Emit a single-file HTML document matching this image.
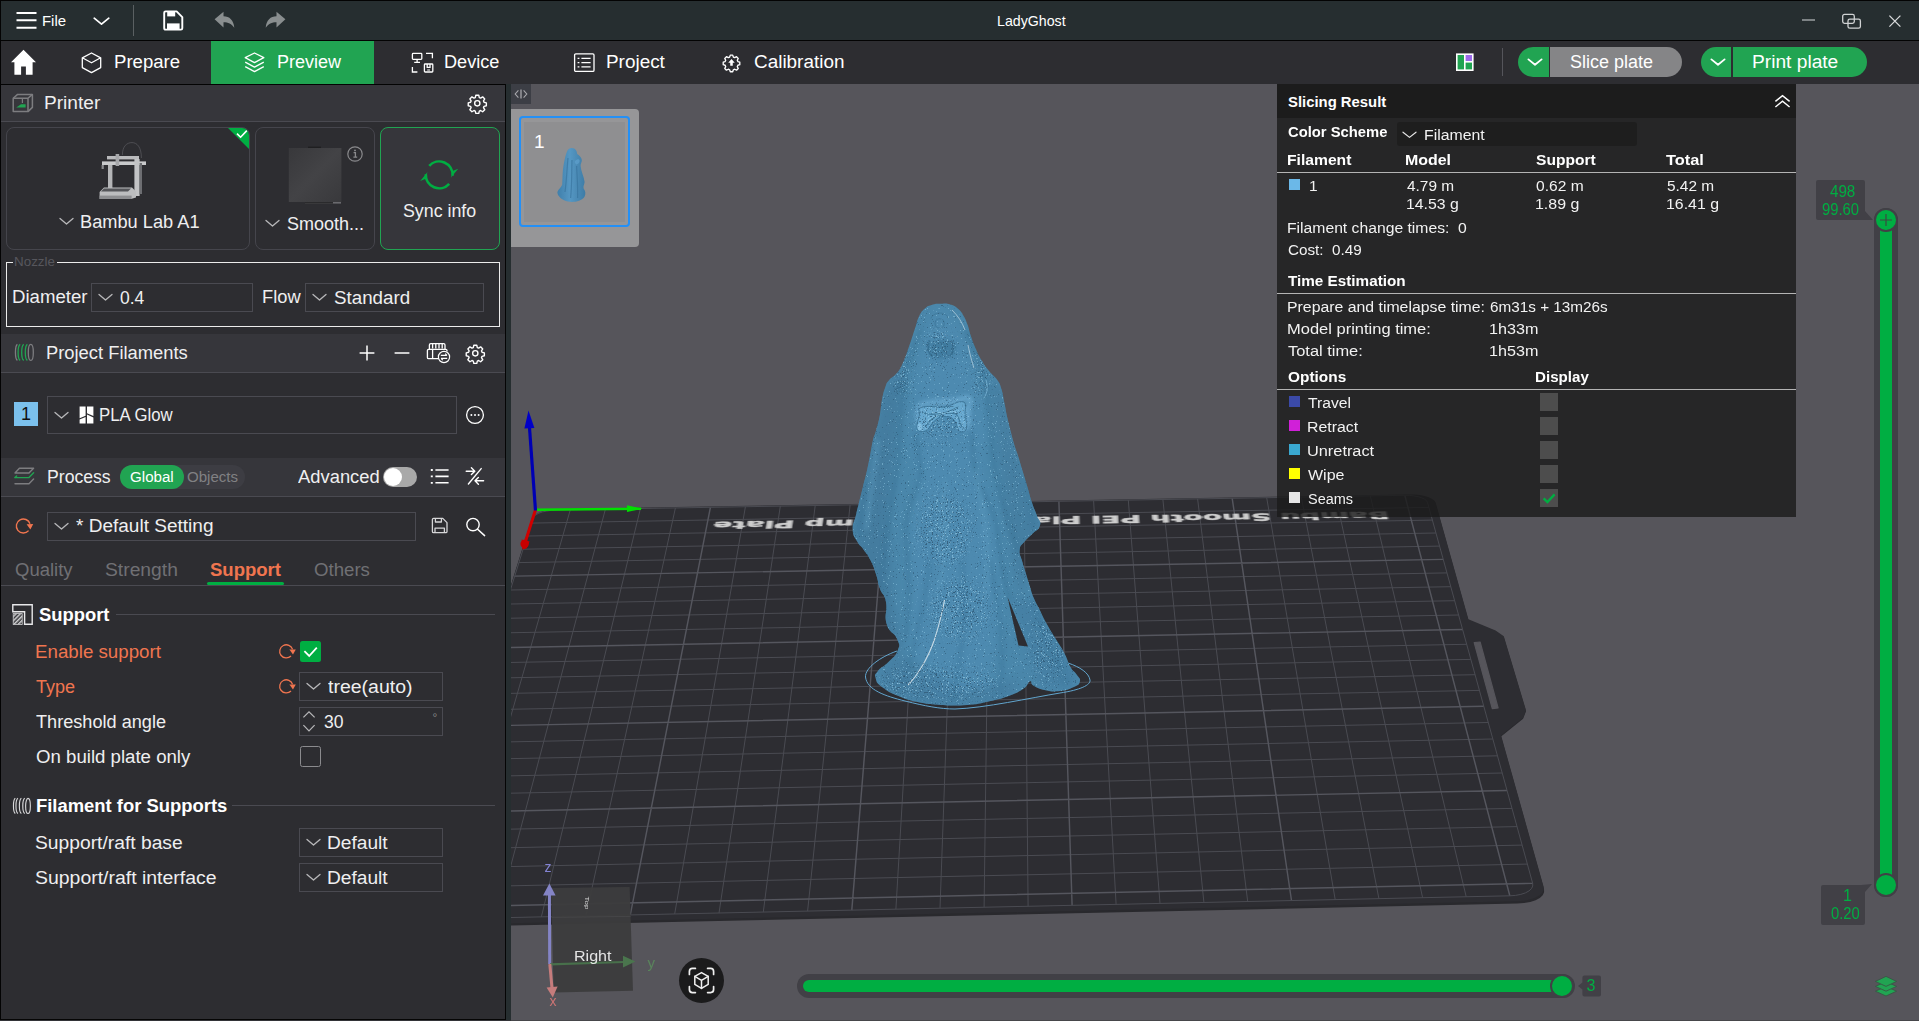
<!DOCTYPE html>
<html lang="en">
<head>
<meta charset="utf-8">
<title>LadyGhost</title>
<style>
*{box-sizing:border-box;margin:0;padding:0}
html,body{width:1919px;height:1021px;overflow:hidden;background:#56555b}
body{font-family:"Liberation Sans",sans-serif;color:#efeff0;font-size:18px;position:relative}
.abs{position:absolute}
.t{position:absolute;white-space:nowrap;line-height:1;transform-origin:0 50%}
svg{position:absolute;overflow:visible}
#titlebar{position:absolute;left:0;top:0;width:1919px;height:41px;background:#262e30;border-top:1px solid #030303;border-left:1px solid #030303;border-bottom:1px solid #030303}
#tabbar{position:absolute;left:0;top:41px;width:1919px;height:43px;background:#2d2d31;border-left:1px solid #030303}
#tabsel{position:absolute;left:211px;top:41px;width:163px;height:43px;background:#21a452}
#sidebar{position:absolute;left:0;top:84px;width:506px;height:937px;background:#2d2d31;border-left:1px solid #030303;border-top:1px solid #030303}
#gap{position:absolute;left:505px;top:84px;width:6px;height:937px;background:#262e30;border-left:1px solid #050505}
.hdr{position:absolute;left:1px;width:504px;background:#36363b}
.hl{position:absolute;left:1px;width:504px;height:1px;background:#4a4a51}
.card{position:absolute;border:1px solid #45454c;border-radius:8px;background:#2d2d31}
.combo{position:absolute;border:1px solid #4a4a51;background:#2d2d31}
.org{color:#f0754f}
.dim{color:#818183}
</style>
<style>
#tFile{left:41.5px!important;transform:scaleX(0.9634)}
#tTitle{left:996.6px!important;transform:scaleX(0.9464)}
#tPrepare{left:113.5px!important;transform:scaleX(1.0313)}
#tPreview{left:276.6px!important;transform:scaleX(1.0012)}
#tDevice{left:444.3px!important;transform:scaleX(1.0072)}
#tProject{left:605.5px!important;transform:scaleX(1.0505)}
#tCalib{left:754.4px!important;transform:scaleX(1.0508)}
#tSlice{left:1569.6px!important;transform:scaleX(0.9983)}
#tPrint{left:1751.6px!important;transform:scaleX(1.0646)}
#tPrinter{left:44.2px!important;transform:scaleX(1.0611)}
#tBambu{left:80.4px!important;transform:scaleX(1.0121)}
#tSmooth{left:287.0px!important;transform:scaleX(0.9995)}
#tSync{left:403.0px!important;transform:scaleX(0.9888)}
#tNozzle{left:13.9px!important;transform:scaleX(1.0736)}
#tDiameter{left:11.5px!important;transform:scaleX(1.0344)}
#tD04{left:120.0px!important;transform:scaleX(0.9715)}
#tFlow{left:262.0px!important;transform:scaleX(1.0157)}
#tStandard{left:334.0px!important;transform:scaleX(1.0410)}
#tProjFil{left:46.3px!important;transform:scaleX(1.0192)}
#tPLA{left:98.6px!important;transform:scaleX(0.9309)}
#tProcess{left:46.5px!important;transform:scaleX(0.9794)}
#tGlobal{left:130.4px!important;transform:scaleX(0.9761)}
#tObjects{left:186.5px!important;transform:scaleX(0.9716)}
#tAdvanced{left:298.4px!important;transform:scaleX(1.0209)}
#tDefSet{left:76.3px!important;transform:scaleX(1.0568)}
#tQuality{left:15.3px!important;transform:scaleX(1.0282)}
#tStrength{left:105.0px!important;transform:scaleX(1.0711)}
#tSupTab{left:210.0px!important;transform:scaleX(1.0291)}
#tOthers{left:314.3px!important;transform:scaleX(1.0348)}
#tSupHead{left:38.8px!important;transform:scaleX(1.0219)}
#tEnable{left:34.7px!important;transform:scaleX(1.0401)}
#tType{left:35.7px!important;transform:scaleX(1.0022)}
#tTree{left:328.2px!important;transform:scaleX(1.0825)}
#tThresh{left:35.7px!important;transform:scaleX(1.0072)}
#t30{left:324.4px!important;transform:scaleX(0.9745)}
#tOnBuild{left:35.7px!important;transform:scaleX(1.0349)}
#tFilSup{left:36.0px!important;transform:scaleX(1.0232)}
#tRaftBase{left:35.1px!important;transform:scaleX(1.0697)}
#tDef1{left:327.1px!important;transform:scaleX(1.0637)}
#tRaftInt{left:35.1px!important;transform:scaleX(1.0798)}
#tDef2{left:327.1px!important;transform:scaleX(1.0637)}
#pSlicing{left:1288.2px!important;transform:scaleX(0.9587)}
#pColorScheme{left:1288.2px!important;transform:scaleX(0.9541)}
#pFilCombo{left:1424.0px!important;transform:scaleX(1.0215)}
#pHFil{left:1287.2px!important;transform:scaleX(1.0100)}
#pHModel{left:1405.3px!important;transform:scaleX(1.0283)}
#pHSupport{left:1536.2px!important;transform:scaleX(1.0060)}
#pHTotal{left:1666.0px!important;transform:scaleX(1.0571)}
#pM1{left:1406.6px!important;transform:scaleX(0.9941)}
#pM2{left:1405.6px!important;transform:scaleX(1.0201)}
#pS1{left:1536.2px!important;transform:scaleX(1.0049)}
#pS2{left:1535.2px!important;transform:scaleX(1.0272)}
#pT1{left:1666.5px!important;transform:scaleX(0.9941)}
#pT2{left:1665.5px!important;transform:scaleX(1.0241)}
#pFCT{left:1287.2px!important;transform:scaleX(1.0133)}
#pCost{left:1288.2px!important;transform:scaleX(0.9834)}
#pTimeEst{left:1288.3px!important;transform:scaleX(0.9851)}
#pPrep{left:1287.3px!important;transform:scaleX(1.0212)}
#pPrepV{left:1489.5px!important;transform:scaleX(0.9868)}
#pMPT{left:1287.2px!important;transform:scaleX(1.0636)}
#pMPTV{left:1488.5px!important;transform:scaleX(1.0422)}
#pTT{left:1288.3px!important;transform:scaleX(1.0587)}
#pTTV{left:1488.5px!important;transform:scaleX(1.0422)}
#pOptions{left:1288.3px!important;transform:scaleX(0.9943)}
#pDisplay{left:1535.4px!important;transform:scaleX(0.9759)}
#pTravel{left:1308.2px!important;transform:scaleX(1.0108)}
#pRetract{left:1307.2px!important;transform:scaleX(1.0231)}
#pUnretract{left:1307.1px!important;transform:scaleX(1.0531)}
#pWipe{left:1308.2px!important;transform:scaleX(1.0319)}
#pSeams{left:1308.2px!important;transform:scaleX(0.9342)}
#tV498{left:1829.6px!important;transform:scaleX(0.9479)}
#tV9960{left:1821.8px!important;transform:scaleX(0.9267)}
#tV020{left:1830.6px!important;transform:scaleX(0.9218)}
</style>
</head>
<body>
<div id="titlebar"></div>
<div id="tabbar"></div>
<div class="abs" style="left:0;top:84px;width:506px;height:1px;background:#030303"></div>
<div id="tabsel"></div>
<!-- title bar content -->
<svg style="left:16px;top:11px" width="22" height="20" viewBox="0 0 22 20"><path d="M0.5 2H20.5M0.5 9.3H20.5M0.5 16.7H20.5" stroke="#fff" stroke-width="2" fill="none"/></svg>
<div class="t" id="tFile" style="left:42px;top:12.5px;font-size:15.5px;color:#fff">File</div>
<svg style="left:93px;top:17px" width="17" height="9" viewBox="0 0 17 9"><path d="M1.2 1.2L8.5 7.2L15.8 1.2" stroke="#fff" stroke-width="1.7" fill="none" stroke-linecap="round" stroke-linejoin="round"/></svg>
<div class="abs" style="left:133px;top:5px;width:1px;height:31px;background:#5a6062"></div>
<svg style="left:163px;top:10px" width="21" height="21" viewBox="0 0 21 21"><path d="M2.6 1.4H13.6L19.3 7.1V18.2Q19.3 19.6 17.9 19.6H2.6Q1.2 19.6 1.2 18.2V2.8Q1.2 1.4 2.6 1.4Z" fill="none" stroke="#fff" stroke-width="1.9" stroke-linejoin="round"/><rect x="4.2" y="2" width="8" height="4.4" fill="#fff"/><rect x="4" y="13.4" width="12.6" height="5.6" fill="#fff"/></svg>
<svg style="left:214px;top:11px" width="22" height="18" viewBox="0 0 22 18"><path d="M0.6 8.2L9.5 0.8V5.2C15.5 5.2 19.6 9 20.3 16.8C17.6 12.6 14.2 11.2 9.5 11.2V16.4Z" fill="#898e8f"/></svg>
<svg style="left:264px;top:11px" width="22" height="18" viewBox="0 0 22 18"><path d="M21.4 8.2L12.5 0.8V5.2C6.5 5.2 2.4 9 1.7 16.8C4.4 12.6 7.8 11.2 12.5 11.2V16.4Z" fill="#898e8f"/></svg>
<div class="t" id="tTitle" style="left:997px;top:13px;font-size:15px;color:#fff">LadyGhost</div>
<!-- window buttons -->
<svg style="left:1800px;top:10px" width="110" height="22" viewBox="0 0 110 22"><path d="M2 10H15" stroke="#aeb2b3" stroke-width="1.3"/><rect x="42.7" y="4.4" width="11.6" height="9" rx="1.8" fill="none" stroke="#d0d2d3" stroke-width="1.3"/><rect x="48" y="9.2" width="12.4" height="9" rx="1.8" fill="none" stroke="#d0d2d3" stroke-width="1.3"/><path d="M89.4 5.6L100.4 16.6M100.4 5.6L89.4 16.6" stroke="#d8dadb" stroke-width="1.3"/></svg>
<!-- tab bar content -->
<svg style="left:10px;top:49px" width="27" height="27" viewBox="0 0 27 27"><path d="M13.5 0.8L26 13.2H22.6V25.8H15.9V17.4H11.1V25.8H4.4V13.2H1Z" fill="#fff"/></svg>
<svg style="left:81px;top:52px" width="22" height="22" viewBox="0 0 22 22"><path d="M10.5 1L19.7 5.8V15.6L10.5 20.6L1.3 15.6V5.8Z M1.3 5.8L10.5 10.8L19.7 5.8" fill="none" stroke="#fff" stroke-width="1.3" stroke-linejoin="round"/></svg>
<div class="t" id="tPrepare" style="left:114px;top:53px;font-size:18px;color:#fff">Prepare</div>
<svg style="left:244px;top:52px" width="22" height="22" viewBox="0 0 22 22"><path d="M10.5 1L19.8 5.7L10.5 10.6L1.2 5.7Z M1.2 10.2L10.5 15.1L19.8 10.2 M1.2 14.7L10.5 19.6L19.8 14.7" fill="none" stroke="#fff" stroke-width="1.3" stroke-linejoin="round"/></svg>
<div class="t" id="tPreview" style="left:277px;top:53px;font-size:18px;color:#fff">Preview</div>
<svg style="left:411px;top:52px" width="24" height="22" viewBox="0 0 24 22"><g fill="none" stroke="#fff" stroke-width="1.3"><rect x="1.4" y="1.4" width="9.4" height="6" rx="0.8"/><path d="M6.1 7.4V10.3M3.2 10.3H9"/><path d="M15 1.4H21.4V6.2"/><path d="M1.4 15V20H6.4"/><rect x="13.4" y="12" width="8.4" height="8" rx="0.8"/><path d="M16.2 12V15.4H19V12"/><path d="M16.2 18H19" stroke-width="1"/></g></svg>
<div class="t" id="tDevice" style="left:445px;top:53px;font-size:18px;color:#fff">Device</div>
<svg style="left:573px;top:52px" width="23" height="21" viewBox="0 0 23 21"><g fill="none" stroke="#fff" stroke-width="1.3"><rect x="1.6" y="1.8" width="19.4" height="17.6" rx="1.2"/><path d="M8.4 6.3H17.6M8.4 10.6H17.6M8.4 14.9H17.6"/><path d="M4.6 6.3H6.4M4.6 10.6H6.4M4.6 14.9H6.4"/></g></svg>
<div class="t" id="tProject" style="left:606px;top:53px;font-size:18px;color:#fff">Project</div>
<svg style="left:723px;top:54px" width="17" height="17" viewBox="0 0 24 24"><path d="M10.3 1.6h3.4l0.9 2.7 1.9 0.8 2.6-1.3 2.4 2.4-1.3 2.6 0.8 1.9 2.7 0.9v3.4l-2.7 0.9-0.8 1.9 1.3 2.6-2.4 2.4-2.6-1.3-1.9 0.8-0.9 2.7h-3.4l-0.9-2.7-1.9-0.8-2.6 1.3-2.4-2.4 1.3-2.6-0.8-1.9-2.7-0.9v-3.4l2.7-0.9 0.8-1.9-1.3-2.6 2.4-2.4 2.6 1.3 1.9-0.8z" fill="none" stroke="#fff" stroke-width="1.9" stroke-linejoin="round"/><path d="M12 7.2L16.6 12.4H13.8V16.6H10.2V12.4H7.4Z" fill="#fff"/></svg>
<div class="t" id="tCalib" style="left:754px;top:53px;font-size:18px;color:#fff">Calibration</div>
<!-- right side of tab bar -->
<svg style="left:1455px;top:52px" width="20" height="20" viewBox="0 0 20 20"><rect x="1" y="1.4" width="17.6" height="17.6" fill="#fff"/><rect x="2.6" y="3" width="6.4" height="14.4" fill="#21a452"/><rect x="10.6" y="10.6" width="6.4" height="6.8" fill="#21a452"/><rect x="10.6" y="3" width="6.4" height="6" fill="#9b6ae8"/></svg>
<div class="abs" style="left:1502px;top:48px;width:1px;height:28px;background:#55555b"></div>
<div class="abs" style="left:1518px;top:47px;width:31px;height:30px;background:#21a452;border-radius:15px 0 0 15px"></div>
<div class="abs" style="left:1550px;top:47px;width:132px;height:30px;background:#858587;border-radius:0 15px 15px 0"></div>
<svg style="left:1527px;top:58px" width="16" height="9" viewBox="0 0 16 9"><path d="M1.4 1.4L8 6.8L14.6 1.4" stroke="#fff" stroke-width="1.8" fill="none" stroke-linecap="round" stroke-linejoin="round"/></svg>
<div class="t" id="tSlice" style="left:1569px;top:53px;font-size:18px;color:#fff">Slice plate</div>
<div class="abs" style="left:1701px;top:47px;width:30px;height:30px;background:#21a452;border-radius:15px 0 0 15px"></div>
<div class="abs" style="left:1733px;top:47px;width:134px;height:30px;background:#21a452;border-radius:0 15px 15px 0"></div>
<svg style="left:1710px;top:58px" width="16" height="9" viewBox="0 0 16 9"><path d="M1.4 1.4L8 6.8L14.6 1.4" stroke="#fff" stroke-width="1.8" fill="none" stroke-linecap="round" stroke-linejoin="round"/></svg>
<div class="t" id="tPrint" style="left:1752px;top:53px;font-size:18px;color:#fff">Print plate</div>
<div id="sidebar"></div>
<div id="gap"></div>
<!-- Printer header -->
<div class="hdr" style="top:85px;height:36px"></div>
<div class="hl" style="top:121px"></div>
<svg style="left:12px;top:93px" width="22" height="20" viewBox="0 0 22 20"><g fill="none" stroke="#7d7d80" stroke-width="1.5" stroke-linejoin="round"><path d="M1.2 5.2L5.6 1.4H20.4V14.4L16 18.6H1.2Z"/><path d="M1.2 5.2H16V18.6M16 5.2L20.4 1.4"/></g><path d="M10.4 5.4V10" stroke="#7d7d80" stroke-width="1.2"/><path d="M4.2 14.6L9 11.2H13.6V14.6Z" fill="#21a452"/></svg>
<div class="t" id="tPrinter" style="left:45px;top:94px;font-size:18px">Printer</div>
<svg style="left:467.6px;top:93.6px" width="18.6" height="18.6" viewBox="0 0 24 24"><path id="gear" d="M10.1 1.6h3.8l0.7 3 1.7 0.7 2.6-1.6 2.7 2.7-1.6 2.6 0.7 1.7 3 0.7v3.8l-3 0.7-0.7 1.7 1.6 2.6-2.7 2.7-2.6-1.6-1.7 0.7-0.7 3h-3.8l-0.7-3-1.7-0.7-2.6 1.6-2.7-2.7 1.6-2.6-0.7-1.7-3-0.7v-3.8l3-0.7 0.7-1.7-1.6-2.6 2.7-2.7 2.6 1.6 1.7-0.7z" fill="none" stroke="#fff" stroke-width="1.8" stroke-linejoin="round"/><circle cx="12" cy="12" r="3.4" fill="none" stroke="#fff" stroke-width="1.8"/></svg>
<!-- printer cards -->
<div class="card" style="left:6px;top:127px;width:244px;height:123px;overflow:hidden"><svg style="right:-1px;top:-1px;left:auto" width="23" height="23" viewBox="0 0 23 23"><path d="M0 0H23V23Z" fill="#00ae42"/><path d="M10 6.6L13.6 10.2L19.8 3.6" stroke="#fff" stroke-width="1.6" fill="none"/></svg></div>
<!-- printer illustration -->
<svg style="left:98px;top:141px" width="52" height="60" viewBox="0 0 52 60"><path d="M24.4 14C24.4 5 29 1.6 34 1.6S43.4 6 43.4 17" fill="none" stroke="#55555a" stroke-width="0.8"/><rect x="9" y="15" width="32" height="3.4" fill="#b9babc"/><rect x="4" y="20.4" width="44" height="3.6" fill="#c8c9cb"/><rect x="10" y="24" width="4.4" height="26" fill="#b4b5b7"/><rect x="36.4" y="18" width="5.2" height="37" fill="#c2c3c5"/><rect x="41.6" y="22" width="2.4" height="31" fill="#6d6e72"/><rect x="17.6" y="13" width="3.6" height="12" fill="#a6a7aa"/><path d="M1.6 51L6 46.4H34L38 50.4V56.4L33 58H1.6Z" fill="#bcbdbf"/><path d="M6 47.4H33L30 50.6H3Z" fill="#55565a"/><rect x="1.6" y="54.6" width="32" height="3.4" fill="#8d8e91"/><rect x="3.6" y="24" width="2.2" height="4" fill="#8a8b8e"/></svg>
<svg style="left:59px;top:217px" width="15" height="9" viewBox="0 0 15 9"><path d="M1 1.4L7.5 7L14 1.4" stroke="#b8b8ba" stroke-width="1.3" fill="none" stroke-linecap="round" stroke-linejoin="round"/></svg>
<div class="t" id="tBambu" style="left:81px;top:213px;font-size:18px">Bambu Lab A1</div>
<div class="card" style="left:255px;top:127px;width:120px;height:123px"></div>
<svg style="left:288px;top:146px" width="54" height="58" viewBox="0 0 54 58"><defs><linearGradient id="bedg" x1="0" y1="0" x2="1" y2="1"><stop offset="0" stop-color="#38383b"/><stop offset="0.5" stop-color="#434346"/><stop offset="1" stop-color="#39393c"/></linearGradient></defs><rect x="20" y="0.6" width="13" height="2" fill="#1f1f21"/><rect x="0.8" y="2" width="52.6" height="54" fill="url(#bedg)"/><rect x="17" y="56" width="36" height="1.6" fill="#6a6a6e"/><rect x="17" y="56" width="28" height="1.6" fill="#2a2a2c"/></svg>
<svg style="left:346px;top:145px" width="18" height="18" viewBox="0 0 18 18"><circle cx="9" cy="9" r="7.2" fill="none" stroke="#8a8a8d" stroke-width="1.2"/><path d="M7.6 7.6H9.4V12M7.4 12.2H11.2" stroke="#8a8a8d" stroke-width="1.3" fill="none"/><circle cx="9" cy="5.4" r="0.95" fill="#8a8a8d"/></svg>
<svg style="left:265px;top:219px" width="15" height="9" viewBox="0 0 15 9"><path d="M1 1.4L7.5 7L14 1.4" stroke="#b8b8ba" stroke-width="1.3" fill="none" stroke-linecap="round" stroke-linejoin="round"/></svg>
<div class="t" id="tSmooth" style="left:287px;top:215px;font-size:18px">Smooth...</div>
<div class="card" style="left:380px;top:127px;width:120px;height:123px;border-color:#21a452;background:#36363b"></div>
<svg style="left:420px;top:159px" width="39" height="32" viewBox="0 0 39 32"><g fill="none" stroke="#00ae42" stroke-width="2.6"><path d="M9.24 6.93A13.4 13.4 0 0 1 32.58 16.6"/><path d="M29.16 24.87A13.4 13.4 0 0 1 5.82 15.2"/></g><path d="M33.2 11.8L38.2 9.8L30.8 18.8Z" fill="#00ae42"/><path d="M5.2 20L0.2 22L7.6 13Z" fill="#00ae42"/></svg>
<div class="t" id="tSync" style="left:403px;top:202px;font-size:18px">Sync info</div>
<!-- Nozzle -->
<div class="abs" style="left:6px;top:262px;width:494px;height:65px;border:1px solid #ececec"></div>
<div class="abs" style="left:13px;top:258px;width:44px;height:10px;background:#2d2d31"></div>
<div class="t" id="tNozzle" style="left:15px;top:256px;font-size:12.5px;color:#57575d">Nozzle</div>
<div class="t" id="tDiameter" style="left:12px;top:288px;font-size:18px">Diameter</div>
<div class="combo" style="left:91px;top:283px;width:162px;height:29px"></div>
<svg style="left:98px;top:293px" width="15" height="9" viewBox="0 0 15 9"><path d="M1 1.4L7.5 7L14 1.4" stroke="#b8b8ba" stroke-width="1.3" fill="none" stroke-linecap="round" stroke-linejoin="round"/></svg>
<div class="t" id="tD04" style="left:120px;top:289px;font-size:18px">0.4</div>
<div class="t" id="tFlow" style="left:263px;top:288px;font-size:18px">Flow</div>
<div class="combo" style="left:305px;top:283px;width:179px;height:29px"></div>
<svg style="left:312px;top:293px" width="15" height="9" viewBox="0 0 15 9"><path d="M1 1.4L7.5 7L14 1.4" stroke="#b8b8ba" stroke-width="1.3" fill="none" stroke-linecap="round" stroke-linejoin="round"/></svg>
<div class="t" id="tStandard" style="left:334px;top:289px;font-size:18px">Standard</div>
<!-- Project Filaments -->
<div class="hdr" style="top:334px;height:38px"></div>
<div class="hl" style="top:372px"></div>
<svg style="left:15px;top:343px" width="20" height="19" viewBox="0 0 20 19"><g fill="none" stroke-width="1.3"><ellipse cx="15.8" cy="9.4" rx="2.5" ry="8" stroke="#7d7d80"/><path d="M12.4 1.4C9.6 3 9.6 15.8 12.4 17.4" stroke="#21a452"/><path d="M8.8 1.4C6 3 6 15.8 8.8 17.4" stroke="#21a452"/><path d="M5.2 1.4C2.4 3 2.4 15.8 5.2 17.4" stroke="#21a452"/><path d="M2.4 1.4C-0.2 3 -0.2 15.8 2.4 17.4" stroke="#7d7d80"/></g></svg>
<div class="t" id="tProjFil" style="left:47px;top:344px;font-size:18px">Project Filaments</div>
<svg style="left:359px;top:345px" width="16" height="16" viewBox="0 0 16 16"><path d="M8 0.6V15.4M0.6 8H15.4" stroke="#fff" stroke-width="1.5"/></svg>
<svg style="left:394px;top:345px" width="16" height="16" viewBox="0 0 16 16"><path d="M0.6 8H15.4" stroke="#fff" stroke-width="1.5"/></svg>
<svg style="left:426px;top:342px" width="25" height="22" viewBox="0 0 25 22"><g fill="none" stroke="#fff" stroke-width="1.3"><path d="M3.4 7.4V3Q3.4 1.6 4.8 1.6H17.6Q19 1.6 19 3V7.4"/><path d="M6.6 1.8V6.6M9.8 1.8V6.6M13 1.8V6.6M16.2 1.8V6.6"/><path d="M14 16.6H2.6Q1.4 16.6 1.4 15.4V8.6Q1.4 7.4 2.6 7.4H19.8Q21 7.4 21 8.6V9.4"/><path d="M6.6 7.6V16.4"/></g><circle cx="18" cy="15" r="5.6" fill="#36363b" stroke="#fff" stroke-width="1.2"/><path d="M14.8 13.4H21M19.2 11.6L21 13.4M21.2 16.4H15M16.8 18.2L15 16.4" stroke="#fff" stroke-width="1.1" fill="none"/></svg>
<svg style="left:465.8px;top:343.8px" width="18.6" height="18.6" viewBox="0 0 24 24"><path d="M10.1 1.6h3.8l0.7 3 1.7 0.7 2.6-1.6 2.7 2.7-1.6 2.6 0.7 1.7 3 0.7v3.8l-3 0.7-0.7 1.7 1.6 2.6-2.7 2.7-2.6-1.6-1.7 0.7-0.7 3h-3.8l-0.7-3-1.7-0.7-2.6 1.6-2.7-2.7 1.6-2.6-0.7-1.7-3-0.7v-3.8l3-0.7 0.7-1.7-1.6-2.6 2.7-2.7 2.6 1.6 1.7-0.7z" fill="none" stroke="#fff" stroke-width="1.8" stroke-linejoin="round"/><circle cx="12" cy="12" r="3.4" fill="none" stroke="#fff" stroke-width="1.8"/></svg>
<!-- filament row -->
<div class="abs" style="left:14px;top:402px;width:24px;height:24px;background:#7bc0ec"></div>
<div class="t" id="tNum1" style="left:21px;top:405px;font-size:18px;color:#111">1</div>
<div class="combo" style="left:47px;top:396px;width:410px;height:38px"></div>
<svg style="left:54px;top:411px" width="15" height="9" viewBox="0 0 15 9"><path d="M1 1.4L7.5 7L14 1.4" stroke="#b8b8ba" stroke-width="1.3" fill="none" stroke-linecap="round" stroke-linejoin="round"/></svg>
<svg style="left:79px;top:406px" width="15" height="18" viewBox="0 0 15 18"><path d="M0.6 0.4H6.6V9.8L0.6 12.2Z M0.6 13.4L6.6 11V17.6H0.6Z M8 0.4H14.4V10L8 7.2Z M8 8.6L14.4 11.4V17.6H8Z" fill="#fff"/></svg>
<div class="t" id="tPLA" style="left:99px;top:406px;font-size:18px">PLA Glow</div>
<svg style="left:465px;top:405px" width="20" height="20" viewBox="0 0 20 20"><circle cx="10" cy="10" r="8.4" fill="none" stroke="#fff" stroke-width="1.3"/><circle cx="6.4" cy="10" r="1" fill="#fff"/><circle cx="10" cy="10" r="1" fill="#fff"/><circle cx="13.6" cy="10" r="1" fill="#fff"/></svg>
<!-- Process header -->
<div class="hdr" style="top:458px;height:38px"></div>
<div class="hl" style="top:496px"></div>
<svg style="left:14px;top:467px" width="21" height="19" viewBox="0 0 21 19"><g fill="none" stroke-width="1.4" stroke-linejoin="round" stroke-linecap="round"><path d="M5.4 1.2H19.6L15 6H1Z" stroke="#7d7d80"/><path d="M1 10.6H15L19.6 5.8" stroke="#21a452"/><path d="M1 10.6L2.6 9" stroke="#21a452"/><path d="M1 16.8H15L19.6 12" stroke="#7d7d80"/></g></svg>
<div class="t" id="tProcess" style="left:47px;top:468px;font-size:18px">Process</div>
<div class="abs" style="left:120px;top:465px;width:125px;height:24px;border-radius:12px;background:#3d3d43"></div>
<div class="abs" style="left:120px;top:465px;width:64px;height:24px;border-radius:12px;background:#21a452"></div>
<div class="t" id="tGlobal" style="left:130px;top:469px;font-size:15.5px;color:#fff">Global</div>
<div class="t" id="tObjects" style="left:186px;top:469px;font-size:15.5px;color:#818183">Objects</div>
<div class="t" id="tAdvanced" style="left:298px;top:468px;font-size:18px">Advanced</div>
<div class="abs" style="left:383px;top:467px;width:34px;height:20px;border-radius:10px;background:#a9a9a9"></div>
<div class="abs" style="left:384px;top:468px;width:18px;height:18px;border-radius:9px;background:#fff"></div>
<svg style="left:430px;top:468px" width="20" height="17" viewBox="0 0 20 17"><path d="M5.4 2H18.6M5.4 8.4H18.6M5.4 14.8H18.6" stroke="#fff" stroke-width="1.6"/><path d="M0.8 2H2.8M0.8 8.4H2.8M0.8 14.8H2.8" stroke="#fff" stroke-width="1.8"/></svg>
<svg style="left:465px;top:466px" width="20" height="20" viewBox="0 0 20 20"><g fill="none" stroke="#fff" stroke-width="1.4" stroke-linecap="round" stroke-linejoin="round"><path d="M3.4 18L16.2 2.6"/><path d="M1.2 5.2H9.6M6.4 1.8L9.8 5.2L6.4 8.6"/><path d="M18.6 14.8H10.2M13.4 11.4L10 14.8L13.4 18.2"/></g></svg>
<!-- preset row -->
<svg style="left:15px;top:517px" width="19" height="18" viewBox="0 0 19 18"><path d="M13.6 13.6A7 7 0 1 1 15 6.8" fill="none" stroke="#f0754f" stroke-width="1.4"/><path d="M11.6 7.2L18.2 7L15.4 12.4Z" fill="#f0754f"/></svg>
<div class="combo" style="left:47px;top:512px;width:369px;height:29px"></div>
<svg style="left:54px;top:522px" width="15" height="9" viewBox="0 0 15 9"><path d="M1 1.4L7.5 7L14 1.4" stroke="#b8b8ba" stroke-width="1.3" fill="none" stroke-linecap="round" stroke-linejoin="round"/></svg>
<div class="t" id="tDefSet" style="left:76px;top:517px;font-size:18px">* Default Setting</div>
<svg style="left:431px;top:517px" width="18" height="17" viewBox="0 0 18 17"><path d="M2.6 1.4H11.8L16 5.6V14.4Q16 15.6 14.8 15.6H2.6Q1.4 15.6 1.4 14.4V2.6Q1.4 1.4 2.6 1.4Z M4.4 1.6V5H10.4V1.6 M4 15.4V11.2H13.4V15.4" fill="none" stroke="#d6d6d8" stroke-width="1.3" stroke-linejoin="round"/></svg>
<svg style="left:465px;top:517px" width="21" height="20" viewBox="0 0 21 20"><circle cx="8" cy="7.6" r="6.2" fill="none" stroke="#fff" stroke-width="1.4"/><path d="M12.6 12.2L19.6 18.6" stroke="#fff" stroke-width="1.5" stroke-linecap="round"/></svg>
<!-- tabs -->
<div class="t" id="tQuality" style="left:15px;top:561px;font-size:18px;color:#707074">Quality</div>
<div class="t" id="tStrength" style="left:105px;top:561px;font-size:18px;color:#707074">Strength</div>
<div class="t" id="tSupTab" style="left:210px;top:561px;font-size:18px;color:#f0754f;font-weight:bold">Support</div>
<div class="t" id="tOthers" style="left:314px;top:561px;font-size:18px;color:#707074">Others</div>
<div class="abs" style="left:207px;top:582px;width:77px;height:3px;border-radius:1.5px;background:#00ae42"></div>
<div class="hl" style="top:585px;background:#4a4a51"></div>
<!-- Support group -->
<svg style="left:12px;top:604px" width="22" height="22" viewBox="0 0 22 22"><defs><pattern id="hat" width="3" height="3" patternUnits="userSpaceOnUse" patternTransform="rotate(-45)"><rect width="3" height="1.6" fill="#cfcfd1"/></pattern></defs><path d="M0.8 0.8H20.2V20.2H12.6V7.8H0.8Z" fill="none" stroke="#e8e8ea" stroke-width="1.4"/><rect x="1.2" y="9.6" width="9" height="10.8" fill="url(#hat)" stroke="#cfcfd1" stroke-width="0.8"/></svg>
<div class="t" id="tSupHead" style="left:38px;top:606px;font-size:18px;font-weight:bold;color:#fff">Support</div>
<div class="abs" style="left:116px;top:614px;width:379px;height:1px;background:#4a4a51"></div>
<div class="t org" id="tEnable" style="left:35px;top:643px;font-size:18px">Enable support</div>
<svg style="left:278px;top:643px" width="19" height="17" viewBox="0 0 19 17"><path d="M13 13A6.6 6.6 0 1 1 14.6 6.4" fill="none" stroke="#f0754f" stroke-width="1.3"/><path d="M11.4 6.6L17.8 6.4L15 11.6Z" fill="#f0754f"/></svg>
<div class="abs" style="left:300px;top:641px;width:21px;height:21px;border-radius:2.5px;background:#00ae42"></div>
<svg style="left:300px;top:641px" width="21" height="21" viewBox="0 0 21 21"><path d="M4.4 10.2L9.2 15L16.8 6.6" fill="none" stroke="#fff" stroke-width="1.8"/></svg>
<div class="t org" id="tType" style="left:35px;top:678px;font-size:18px">Type</div>
<svg style="left:278px;top:678px" width="19" height="17" viewBox="0 0 19 17"><path d="M13 13A6.6 6.6 0 1 1 14.6 6.4" fill="none" stroke="#f0754f" stroke-width="1.3"/><path d="M11.4 6.6L17.8 6.4L15 11.6Z" fill="#f0754f"/></svg>
<div class="combo" style="left:299px;top:672px;width:144px;height:29px"></div>
<svg style="left:306px;top:682px" width="15" height="9" viewBox="0 0 15 9"><path d="M1 1.4L7.5 7L14 1.4" stroke="#b8b8ba" stroke-width="1.3" fill="none" stroke-linecap="round" stroke-linejoin="round"/></svg>
<div class="t" id="tTree" style="left:328px;top:678px;font-size:18px">tree(auto)</div>
<div class="t" id="tThresh" style="left:35px;top:713px;font-size:18px">Threshold angle</div>
<div class="combo" style="left:299px;top:707px;width:144px;height:29px"></div>
<svg style="left:302px;top:710px" width="14" height="23" viewBox="0 0 14 23"><path d="M1.4 7.4L7 1.8L12.6 7.4M1.4 15.2L7 20.8L12.6 15.2" stroke="#b8b8ba" stroke-width="1.2" fill="none"/></svg>
<div class="t" id="t30" style="left:324px;top:713px;font-size:18px">30</div>
<div class="t" id="tDeg" style="left:432.5px;top:711.5px;font-size:12px;color:#818183">°</div>
<div class="t" id="tOnBuild" style="left:35px;top:748px;font-size:18px">On build plate only</div>
<div class="abs" style="left:300px;top:746px;width:21px;height:21px;border-radius:2.5px;border:1.3px solid #8b8b8e"></div>
<!-- Filament for supports -->
<svg style="left:13px;top:797px" width="19" height="18" viewBox="0 0 20 19"><g fill="none" stroke-width="1.2" stroke="#d8d8da"><ellipse cx="15.8" cy="9.4" rx="2.5" ry="8"/><path d="M12.4 1.4C9.6 3 9.6 15.8 12.4 17.4"/><path d="M8.8 1.4C6 3 6 15.8 8.8 17.4"/><path d="M5.2 1.4C2.4 3 2.4 15.8 5.2 17.4"/><path d="M2.4 1.4C-0.2 3 -0.2 15.8 2.4 17.4"/></g></svg>
<div class="t" id="tFilSup" style="left:37px;top:797px;font-size:18px;font-weight:bold;color:#fff">Filament for Supports</div>
<div class="abs" style="left:232px;top:805px;width:263px;height:1px;background:#4a4a51"></div>
<div class="t" id="tRaftBase" style="left:35px;top:834px;font-size:18px">Support/raft base</div>
<div class="combo" style="left:299px;top:828px;width:144px;height:29px"></div>
<svg style="left:306px;top:838px" width="15" height="9" viewBox="0 0 15 9"><path d="M1 1.4L7.5 7L14 1.4" stroke="#b8b8ba" stroke-width="1.3" fill="none" stroke-linecap="round" stroke-linejoin="round"/></svg>
<div class="t" id="tDef1" style="left:328px;top:834px;font-size:18px">Default</div>
<div class="t" id="tRaftInt" style="left:35px;top:869px;font-size:18px">Support/raft interface</div>
<div class="combo" style="left:299px;top:863px;width:144px;height:29px"></div>
<svg style="left:306px;top:873px" width="15" height="9" viewBox="0 0 15 9"><path d="M1 1.4L7.5 7L14 1.4" stroke="#b8b8ba" stroke-width="1.3" fill="none" stroke-linecap="round" stroke-linejoin="round"/></svg>
<div class="t" id="tDef2" style="left:328px;top:869px;font-size:18px">Default</div>
<!-- 3D scene -->
<svg id="scene" style="left:511px;top:84px" width="1408" height="937" viewBox="511 84 1408 937">
<defs><clipPath id="vp"><rect x="511" y="84" width="1408" height="937"/></clipPath><filter id="b2" color-interpolation-filters="sRGB" x="-20%" y="-20%" width="140%" height="140%"><feGaussianBlur stdDeviation="2.2"/></filter><filter id="b4" color-interpolation-filters="sRGB" x="-30%" y="-30%" width="160%" height="160%"><feGaussianBlur stdDeviation="4"/></filter><filter id="spk" color-interpolation-filters="sRGB" x="0" y="0" width="100%" height="100%"><feTurbulence type="fractalNoise" baseFrequency="0.9" numOctaves="2" seed="7" result="n"/><feColorMatrix in="n" type="matrix" values="0 0 0 0 0.17  0 0 0 0 0.32  0 0 0 0 0.43  18 0 0 0 -12.4"/></filter><filter id="spk2" color-interpolation-filters="sRGB" x="0" y="0" width="100%" height="100%"><feTurbulence type="fractalNoise" baseFrequency="0.85" numOctaves="2" seed="23" result="n"/><feColorMatrix in="n" type="matrix" values="0 0 0 0 0.62  0 0 0 0 0.83  0 0 0 0 0.93  0 18 0 0 -12.7"/></filter><filter id="spk3" color-interpolation-filters="sRGB" x="0" y="0" width="100%" height="100%"><feTurbulence type="fractalNoise" baseFrequency="0.8" numOctaves="2" seed="41" result="n"/><feColorMatrix in="n" type="matrix" values="0 0 0 0 0.17  0 0 0 0 0.32  0 0 0 0 0.43  18 0 0 0 -11.5"/></filter><filter id="spk4" color-interpolation-filters="sRGB" x="0" y="0" width="100%" height="100%"><feTurbulence type="fractalNoise" baseFrequency="0.8" numOctaves="2" seed="57" result="n"/><feColorMatrix in="n" type="matrix" values="0 0 0 0 0.62  0 0 0 0 0.83  0 0 0 0 0.93  0 18 0 0 -11.7"/></filter><mask id="spm" maskUnits="userSpaceOnUse" x="840" y="290" width="260" height="430"><g filter="url(#b4)" fill="#fff"><ellipse cx="942" cy="420" rx="26" ry="18"/><ellipse cx="944" cy="530" rx="26" ry="36"/><ellipse cx="940" cy="682" rx="58" ry="16"/><ellipse cx="903" cy="372" rx="7" ry="24"/><ellipse cx="982" cy="372" rx="7" ry="24"/><ellipse cx="1048" cy="650" rx="16" ry="32"/><ellipse cx="940" cy="345" rx="14" ry="14"/><ellipse cx="960" cy="610" rx="30" ry="30"/></g></mask></defs>
<g clip-path="url(#vp)">
<path d="M531.7 519.4 L532.9 517.4 L535.3 515.5 L538.8 513.8 L543.1 512.3 L548.1 511.2 L553.4 510.4 L559.0 510.1 L1409.0 495.4 L1414.4 495.5 L1419.7 496.0 L1424.6 497.0 L1428.8 498.3 L1432.1 499.9 L1434.4 501.7 L1435.6 503.6 L1468.4 620.2 L1495.6 631.4 L1503.8 637.2 L1526.0 711.3 L1523.1 718.7 L1501.1 736.5 L1544.0 889.1 L1544.1 892.2 L1542.7 895.2 L1539.8 897.9 L1535.6 900.2 L1530.2 902.0 L1524.0 903.1 L1517.3 903.6 L435.6 927.2 L428.7 927.0 L422.4 926.1 L417.0 924.5 L412.8 922.4 L409.9 919.8 L408.5 916.8 L408.7 913.7Z" fill="#29292d"/>
<path d="M531.7 518.4 L532.9 516.4 L535.3 514.5 L538.8 512.8 L543.1 511.3 L548.1 510.2 L553.4 509.4 L559.0 509.1 L1409.0 494.4 L1414.4 494.5 L1419.7 495.0 L1424.6 496.0 L1428.8 497.3 L1432.1 498.9 L1434.4 500.7 L1435.6 502.6 L1468.4 619.2 L1495.6 630.4 L1503.8 636.2 L1526.0 710.3 L1523.1 717.7 L1501.1 735.5 L1543.6 886.7 L1543.7 889.8 L1542.3 892.8 L1539.4 895.5 L1535.2 897.8 L1529.8 899.6 L1523.7 900.7 L1516.9 901.2 L436.0 924.8 L429.2 924.6 L422.9 923.7 L417.5 922.1 L413.2 919.9 L410.3 917.3 L408.9 914.4 L409.1 911.3Z" fill="#2d2d32"/>
<path d="M1474.2 642.7 L1480.1 642.0 L1498.1 707.9 L1492.3 708.7Z" fill="#56555b" stroke="#56555b" stroke-width="1.2" stroke-linejoin="round"/>
<path d="M570.3 509.8 L452.4 918.8 M531.2 523.1 L1428.9 507.4 M605.4 509.2 L497.0 917.8 M527.2 536.0 L1432.4 520.1 M640.4 508.6 L541.4 916.8 M523.1 549.2 L1435.9 533.0 M675.4 508.0 L585.9 915.9 M519.0 562.6 L1439.5 546.1 M745.4 506.8 L674.7 913.9 M510.4 590.0 L1447.0 572.9 M780.3 506.2 L719.0 913.0 M506.1 604.1 L1450.8 586.7 M815.2 505.6 L763.3 912.0 M501.6 618.4 L1454.6 600.7 M850.1 504.9 L807.6 911.1 M497.1 633.0 L1458.6 615.0 M919.8 503.7 L895.9 909.1 M487.7 662.9 L1466.7 644.3 M954.6 503.1 L940.0 908.2 M482.9 678.3 L1470.8 659.4 M989.4 502.5 L984.1 907.2 M478.1 694.0 L1475.1 674.7 M1024.2 501.9 L1028.1 906.3 M473.1 710.0 L1479.4 690.4 M1093.6 500.7 L1116.1 904.4 M462.9 742.8 L1488.2 722.5 M1128.3 500.1 L1160.0 903.4 M457.6 759.7 L1492.8 739.0 M1162.9 499.5 L1203.9 902.4 M452.3 777.0 L1497.5 755.8 M1197.6 498.9 L1247.7 901.5 M446.8 794.5 L1502.2 773.0 M1266.7 497.7 L1335.2 899.6 M435.5 830.7 L1512.0 808.4 M1301.3 497.1 L1378.9 898.6 M429.7 849.4 L1517.0 826.6 M1335.8 496.5 L1422.6 897.7 M423.8 868.4 L1522.1 845.1 M1370.3 495.9 L1466.2 896.7 M417.8 887.8 L1527.3 864.1" stroke="#4a4b52" stroke-width="1" fill="none"/>
<path d="M710.4 507.4 L630.3 914.9 M514.7 576.1 L1443.2 559.4 M885.0 504.3 L851.8 910.1 M492.4 647.8 L1462.6 629.5 M1058.9 501.3 L1072.1 905.3 M468.0 726.2 L1483.8 706.3 M1232.2 498.3 L1291.5 900.5 M441.2 812.4 L1507.0 790.5 M1404.8 495.3 L1509.8 895.8 M411.6 907.6 L1532.7 883.4" stroke="#55565e" stroke-width="1.45" fill="none"/>
<path d="M532.8 518.0 L533.9 516.3 L536.0 514.7 L538.9 513.2 L542.6 511.9 L546.9 511.0 L551.5 510.3 L556.3 510.0 L1404.8 495.3 L1409.4 495.4 L1413.9 495.9 L1418.1 496.7 L1421.7 497.8 L1424.6 499.2 L1426.5 500.7 L1427.5 502.4 L1532.7 883.4 L1532.7 886.1 L1531.5 888.6 L1529.0 890.9 L1525.4 892.9 L1520.8 894.4 L1515.5 895.4 L1509.8 895.8 L434.6 919.2 L428.7 919.0 L423.3 918.2 L418.7 916.9 L415.1 915.0 L412.6 912.8 L411.4 910.3 L411.6 907.6Z" stroke="#4a4b52" stroke-width="1" fill="none"/>
</g></svg>
<div class="abs" style="left:511px;top:84px;width:1408px;height:937px;overflow:hidden;pointer-events:none">
<div class="abs" style="left:-511px;top:-84px;width:256px;height:256px;transform-origin:0 0;transform:matrix3d(3.5310585,-0.041814572,0,3.7552452e-05,-0.83493848,0.83799194,0,-0.00082731447,0,0,1,0,535.19608,510.41561,0,1)">
<svg style="left:0;top:0" width="256" height="256" viewBox="0 0 256 256"><text x="147.9" y="18.0" text-anchor="middle" font-family="DejaVu Sans,Liberation Sans,sans-serif" font-weight="bold" font-size="8.3" fill="#cdcdcd" textLength="192.2" stroke="#cdcdcd" stroke-width="0.25" lengthAdjust="spacingAndGlyphs" transform="rotate(180.36 147.9 15)">Bambu Smooth PEI Plate / High Temp Plate</text></svg>
</div></div>
<svg style="left:511px;top:84px" width="1408" height="937" viewBox="511 84 1408 937">
<g clip-path="url(#vp)">
<path d="M897 651C880 657 865 668 865.5 677C867 690 885 696 905 701C925 706 940 709 955 709C985 708 1030 698 1060 693C1080 690 1091 685 1090 680C1089 673 1080 667 1068 663" fill="none" stroke="#62a6cf" stroke-width="1"/>
<path d="M1017 647.4L1030 648" fill="none" stroke="#62a6cf" stroke-width="1"/>
<defs><clipPath id="stc"><path d="M940.9 303.8 C945.9 303.7 945.7 303.1 950.3 304.4 C954.9 305.7 954.5 305.7 958.0 308.8 C961.5 311.9 961.1 311.7 963.6 315.9 C966.1 320.1 965.6 319.3 967.5 324.5 C969.4 329.7 968.6 329.2 970.7 335.5 C972.8 341.8 972.5 341.3 975.4 348.0 C978.3 354.7 977.9 354.2 981.7 360.5 C985.5 366.8 985.3 366.3 989.5 371.5 C993.7 376.7 994.2 375.4 997.3 380.0 C1000.4 384.6 999.4 382.6 1001.3 388.7 C1003.2 394.8 1002.7 395.0 1004.4 402.9 C1006.1 410.8 1005.6 410.2 1007.5 418.5 C1009.4 426.8 1009.3 426.3 1011.4 434.2 C1013.5 442.1 1013.6 442.6 1015.4 448.3 C1017.2 454.0 1016.1 449.6 1018.0 455.7 C1019.9 461.8 1020.2 463.0 1022.7 471.3 C1025.2 479.6 1024.9 478.6 1027.4 487.0 C1029.9 495.4 1029.5 495.2 1032.0 502.7 C1034.5 510.2 1034.7 509.1 1036.8 515.2 C1038.9 521.3 1041.3 520.4 1040.0 525.4 C1038.7 530.4 1036.2 529.6 1032.0 534.0 C1027.8 538.4 1027.6 537.6 1024.3 541.8 C1021.0 546.0 1020.2 544.7 1019.6 549.7 C1019.0 554.7 1020.2 554.3 1021.9 560.6 C1023.6 566.9 1023.7 566.5 1025.8 573.2 C1027.9 579.9 1027.6 579.2 1029.7 585.7 C1031.8 592.2 1031.0 591.3 1033.6 597.6 C1036.2 603.9 1036.0 602.4 1039.5 609.4 C1043.0 616.4 1042.5 616.2 1046.8 624.0 C1051.1 631.8 1050.9 631.0 1055.6 638.8 C1060.3 646.6 1060.6 646.0 1064.5 653.4 C1068.4 660.8 1067.2 661.2 1070.3 666.7 C1073.4 672.2 1073.6 670.1 1076.2 674.0 C1078.8 677.9 1080.7 677.9 1079.9 681.4 C1079.1 684.9 1078.6 684.7 1073.3 687.2 C1068.0 689.7 1067.4 690.1 1060.0 690.9 C1052.6 691.7 1052.4 691.6 1045.4 690.2 C1038.4 688.8 1037.7 688.1 1033.6 685.8 C1029.5 683.5 1032.7 680.6 1030.0 681.4 C1027.3 682.2 1029.0 684.8 1023.3 688.7 C1017.6 692.6 1017.6 692.7 1008.6 696.0 C999.6 699.3 1000.5 698.8 989.5 701.2 C978.5 703.6 980.4 703.9 967.5 704.9 C954.6 705.9 954.3 705.7 941.0 704.9 C927.7 704.1 928.9 704.4 917.6 702.0 C906.3 699.6 907.9 699.9 898.5 696.0 C889.1 692.1 888.4 691.9 882.3 687.2 C876.2 682.5 876.9 682.7 875.7 678.4 C874.5 674.1 874.6 675.3 877.9 671.0 C881.2 666.7 882.9 667.8 888.2 662.3 C893.5 656.8 895.4 656.8 897.7 650.5 C900.0 644.2 899.9 645.9 897.0 638.8 C894.1 631.7 889.6 633.8 886.7 624.0 C883.8 614.2 887.8 611.4 886.0 602.0 C884.2 592.6 882.6 596.1 880.0 588.8 C877.4 581.5 878.7 582.2 876.2 574.7 C873.7 567.2 874.0 567.3 870.7 560.6 C867.4 553.9 867.2 554.7 863.7 549.7 C860.2 544.7 860.3 547.1 857.4 541.8 C854.5 536.5 853.1 537.1 852.7 530.0 C852.3 522.9 854.2 522.5 855.9 515.2 C857.6 507.9 857.1 510.2 859.0 502.7 C860.9 495.2 860.8 495.4 862.9 487.0 C865.0 478.6 864.9 479.6 866.8 471.3 C868.7 463.0 868.3 464.0 870.0 455.7 C871.7 447.4 871.4 446.6 873.0 440.0 C874.6 433.4 874.1 437.6 875.9 431.0 C877.7 424.4 878.2 423.7 879.8 415.4 C881.4 407.1 880.5 407.2 882.0 399.7 C883.5 392.2 883.4 392.5 885.3 387.2 C887.2 381.9 886.1 383.8 889.2 380.0 C892.3 376.2 893.2 377.8 897.0 373.0 C900.8 368.2 900.4 368.2 903.3 362.0 C906.2 355.8 905.5 356.7 908.0 349.6 C910.5 342.5 910.6 341.8 912.7 335.5 C914.8 329.2 914.1 331.0 915.8 326.0 C917.5 321.0 916.7 321.2 919.0 316.6 C921.3 312.0 921.2 311.9 924.5 308.8 C927.8 305.7 927.1 306.2 931.5 304.9 C935.9 303.6 935.9 303.9 940.9 303.8Z"/></clipPath></defs>
<path d="M940.9 303.8 C945.9 303.7 945.7 303.1 950.3 304.4 C954.9 305.7 954.5 305.7 958.0 308.8 C961.5 311.9 961.1 311.7 963.6 315.9 C966.1 320.1 965.6 319.3 967.5 324.5 C969.4 329.7 968.6 329.2 970.7 335.5 C972.8 341.8 972.5 341.3 975.4 348.0 C978.3 354.7 977.9 354.2 981.7 360.5 C985.5 366.8 985.3 366.3 989.5 371.5 C993.7 376.7 994.2 375.4 997.3 380.0 C1000.4 384.6 999.4 382.6 1001.3 388.7 C1003.2 394.8 1002.7 395.0 1004.4 402.9 C1006.1 410.8 1005.6 410.2 1007.5 418.5 C1009.4 426.8 1009.3 426.3 1011.4 434.2 C1013.5 442.1 1013.6 442.6 1015.4 448.3 C1017.2 454.0 1016.1 449.6 1018.0 455.7 C1019.9 461.8 1020.2 463.0 1022.7 471.3 C1025.2 479.6 1024.9 478.6 1027.4 487.0 C1029.9 495.4 1029.5 495.2 1032.0 502.7 C1034.5 510.2 1034.7 509.1 1036.8 515.2 C1038.9 521.3 1041.3 520.4 1040.0 525.4 C1038.7 530.4 1036.2 529.6 1032.0 534.0 C1027.8 538.4 1027.6 537.6 1024.3 541.8 C1021.0 546.0 1020.2 544.7 1019.6 549.7 C1019.0 554.7 1020.2 554.3 1021.9 560.6 C1023.6 566.9 1023.7 566.5 1025.8 573.2 C1027.9 579.9 1027.6 579.2 1029.7 585.7 C1031.8 592.2 1031.0 591.3 1033.6 597.6 C1036.2 603.9 1036.0 602.4 1039.5 609.4 C1043.0 616.4 1042.5 616.2 1046.8 624.0 C1051.1 631.8 1050.9 631.0 1055.6 638.8 C1060.3 646.6 1060.6 646.0 1064.5 653.4 C1068.4 660.8 1067.2 661.2 1070.3 666.7 C1073.4 672.2 1073.6 670.1 1076.2 674.0 C1078.8 677.9 1080.7 677.9 1079.9 681.4 C1079.1 684.9 1078.6 684.7 1073.3 687.2 C1068.0 689.7 1067.4 690.1 1060.0 690.9 C1052.6 691.7 1052.4 691.6 1045.4 690.2 C1038.4 688.8 1037.7 688.1 1033.6 685.8 C1029.5 683.5 1032.7 680.6 1030.0 681.4 C1027.3 682.2 1029.0 684.8 1023.3 688.7 C1017.6 692.6 1017.6 692.7 1008.6 696.0 C999.6 699.3 1000.5 698.8 989.5 701.2 C978.5 703.6 980.4 703.9 967.5 704.9 C954.6 705.9 954.3 705.7 941.0 704.9 C927.7 704.1 928.9 704.4 917.6 702.0 C906.3 699.6 907.9 699.9 898.5 696.0 C889.1 692.1 888.4 691.9 882.3 687.2 C876.2 682.5 876.9 682.7 875.7 678.4 C874.5 674.1 874.6 675.3 877.9 671.0 C881.2 666.7 882.9 667.8 888.2 662.3 C893.5 656.8 895.4 656.8 897.7 650.5 C900.0 644.2 899.9 645.9 897.0 638.8 C894.1 631.7 889.6 633.8 886.7 624.0 C883.8 614.2 887.8 611.4 886.0 602.0 C884.2 592.6 882.6 596.1 880.0 588.8 C877.4 581.5 878.7 582.2 876.2 574.7 C873.7 567.2 874.0 567.3 870.7 560.6 C867.4 553.9 867.2 554.7 863.7 549.7 C860.2 544.7 860.3 547.1 857.4 541.8 C854.5 536.5 853.1 537.1 852.7 530.0 C852.3 522.9 854.2 522.5 855.9 515.2 C857.6 507.9 857.1 510.2 859.0 502.7 C860.9 495.2 860.8 495.4 862.9 487.0 C865.0 478.6 864.9 479.6 866.8 471.3 C868.7 463.0 868.3 464.0 870.0 455.7 C871.7 447.4 871.4 446.6 873.0 440.0 C874.6 433.4 874.1 437.6 875.9 431.0 C877.7 424.4 878.2 423.7 879.8 415.4 C881.4 407.1 880.5 407.2 882.0 399.7 C883.5 392.2 883.4 392.5 885.3 387.2 C887.2 381.9 886.1 383.8 889.2 380.0 C892.3 376.2 893.2 377.8 897.0 373.0 C900.8 368.2 900.4 368.2 903.3 362.0 C906.2 355.8 905.5 356.7 908.0 349.6 C910.5 342.5 910.6 341.8 912.7 335.5 C914.8 329.2 914.1 331.0 915.8 326.0 C917.5 321.0 916.7 321.2 919.0 316.6 C921.3 312.0 921.2 311.9 924.5 308.8 C927.8 305.7 927.1 306.2 931.5 304.9 C935.9 303.6 935.9 303.9 940.9 303.8Z" fill="#4a87ab"/>
<g clip-path="url(#stc)">
<g filter="url(#b4)">
<path d="M852 530L873 440L886 385L902 372L896 450L888 520L892 600L902 650L885 662Z" fill="#42799c" opacity="0.8"/>
<path d="M1040 525L1015 445L1003 390L990 376L998 450L1006 520L1012 560L1022 600Z" fill="#447c9f" opacity="0.75"/>
<path d="M925 330L940 305L960 330L975 370L988 420L982 470L998 520L1004 600L990 690L930 700L907 640L907 540L917 470L907 420Z" fill="#4e8bb0" opacity="0.85"/>
<path d="M1010 598L1032 600L1072 670L1076 686L1040 688Z" fill="#457ea2" opacity="0.8"/>
<path d="M880 670L900 655L960 690L1020 680L1010 700L940 708L890 695Z" fill="#447c9f" opacity="0.7"/>
</g>
<g filter="url(#b2)">
<path d="M918 404C925 398 950 400 962 396C970 393 975 398 972 406C968 414 975 428 966 430C958 431 960 418 950 414C938 412 928 428 920 428C914 426 914 410 918 404Z" fill="#6aa9cf" opacity="0.8"/>
<path d="M922 409C934 405 950 411 968 402" stroke="#38708f" stroke-width="2.2" fill="none" opacity="0.85"/>
<path d="M928 346C934 337 950 337 956 346C957 354 950 359 942 359C934 359 927 354 928 346Z" fill="#3b7497" opacity="0.6"/>
<g stroke="#3a7294" fill="none" opacity="0.6" stroke-width="3">
<path d="M905 385C898 420 900 450 897 470C890 510 884 550 880 590"/>
<path d="M985 385C992 420 990 450 996 475C1004 510 1012 540 1020 552"/>
<path d="M915 432C918 450 922 465 920 478C912 500 905 515 906 535C908 570 912 600 905 640"/>
<path d="M972 432C972 450 974 465 976 478C988 500 996 515 998 535C1002 570 1006 590 1010 600"/>
<path d="M921 330C912 350 905 372 899 392M966 330C975 350 982 372 988 392"/>
</g>
<path d="M930 560C925 600 915 650 900 690M962 560C966 610 962 660 952 702M990 560C1000 610 1005 650 1000 692M1032 600C1042 630 1056 660 1066 685M866 480C864 500 862 520 860 536M1026 480C1028 500 1032 515 1034 528" stroke="#3e789b" stroke-width="4" fill="none" opacity="0.5"/>
<path d="M945 480C942 520 948 550 940 590M975 470C985 510 990 560 985 600M878 440C874 470 870 500 866 530" stroke="#5997bc" stroke-width="5" fill="none" opacity="0.5"/>
</g>
<g fill="none" stroke-linecap="round">
<circle cx="939.6" cy="323.4" r="4.6" stroke="#3d7699" stroke-width="1.1" opacity="0.8"/>
<path d="M931 318C933 312 945 311 948 317" stroke="#3d7699" stroke-width="1" opacity="0.7"/>
<path d="M929.6 341C927 347 928 353 932 356M951.6 341C954.4 347 953.6 353 950 356" stroke="#356c8d" stroke-width="1.6" opacity="0.8"/>
<circle cx="940.4" cy="347.6" r="5.4" stroke="#3d7699" stroke-width="1" opacity="0.7"/>
<path d="M918.6 409C924 404 934 408 944 407C952 406 958 400 964 402C968 406 963 412 966 420C968 428 966 432 962 432C956 432 958 420 950 417C940 414 934 420 929 428C925 433 918 433 917 428C916 420 922 416 918.6 409Z" fill="#69a9d0" stroke="#3a7294" stroke-width="1" opacity="0.9"/>
<path d="M923 413C932 416 946 414 958 407M926 426C932 416 944 411 956 414C960 418 960 426 963 428" stroke="#3a7294" stroke-width="1.2" opacity="0.85"/>
<path d="M928 420C936 414 948 412 957 411" stroke="#8cc6e6" stroke-width="1.2" opacity="0.7"/>
<ellipse cx="919.6" cy="427" rx="2.2" ry="3.4" fill="#8cc6e6" stroke="none" opacity="0.8"/>
<path d="M898 384C901 380 905 381 906 384M895 390C899 386 904 387 905 391" stroke="#2f617f" stroke-width="1" opacity="0.7"/>
<path d="M986 380C988 386 988 392 984 398" stroke="#8cc6e6" stroke-width="1" opacity="0.6"/>
</g>
<path d="M944.5 600C942 615 938 628 935 638C931 650 926 660 921 668C917 675 912 681 908 685" stroke="#dfe9ee" stroke-width="1.1" fill="none" opacity="0.85"/>
<path d="M952 310C958 316 962 322 965 330M968 345C970 355 972 362 974 368" stroke="#cfe0ea" stroke-width="0.9" fill="none" opacity="0.7"/>
<rect x="850" y="300" width="235" height="410" filter="url(#spk)" opacity="0.55"/>
<rect x="850" y="300" width="235" height="410" filter="url(#spk2)" opacity="0.45"/>
<g mask="url(#spm)"><rect x="850" y="300" width="235" height="410" filter="url(#spk3)" opacity="0.7"/><rect x="850" y="300" width="235" height="410" filter="url(#spk4)" opacity="0.6"/></g>
</g>
<path d="M1007.5 597L1028 646.5L1018.5 645.5Z" fill="#2d2d32"/>
</g>
<g>
<path d="M535.5 509.8L641 508.7" stroke="#00e000" stroke-width="2.6"/><path d="M627 505.2L642.5 508.7L627 512Z" fill="#00e000"/>
<path d="M535.5 509.8L525.3 542" stroke="#d00000" stroke-width="3"/><path d="M521.6 539.6L529.6 541.4L526.4 548.6L522.4 549.6Z" fill="#c80000"/><circle cx="524.6" cy="544" r="4.2" fill="#c80000"/>
<path d="M535.5 510.5L529.3 425" stroke="#0000b4" stroke-width="3.2"/><path d="M524.4 428.6L528.5 410.6L534.4 428Z" fill="#0000c8"/>
</g>
</svg>
<!-- collapse button + thumbnail list -->
<div class="abs" style="left:511px;top:84px;width:20px;height:20px;background:#3c3e45"></div>
<svg style="left:514px;top:88px" width="14" height="12" viewBox="0 0 14 12"><path d="M4.4 2.4L1.2 6L4.4 9.6M9.6 2.4L12.8 6L9.6 9.6" stroke="#a8a8ac" stroke-width="1.1" fill="none"/><path d="M7 1.6V10.4" stroke="#a8a8ac" stroke-width="1.3"/></svg>
<div class="abs" style="left:511px;top:109px;width:128px;height:138px;background:#969698;border-radius:0 4px 4px 0"></div>
<div class="abs" style="left:524px;top:122px;width:101px;height:100px;background:#8f8f91"></div>
<div class="abs" style="left:518.5px;top:116px;width:111px;height:111px;border:2px solid #2490f6;border-radius:4px"></div>
<div class="t" id="tThumb1" style="left:534px;top:132px;font-size:19px;color:#fff">1</div>
<svg style="left:556px;top:146px" width="32" height="58" viewBox="0 0 32 58"><defs><linearGradient id="mg" x1="0" y1="0" x2="1" y2="0"><stop offset="0" stop-color="#3f7fab"/><stop offset="0.45" stop-color="#5597c3"/><stop offset="1" stop-color="#3e7ca6"/></linearGradient></defs><path d="M15.6 2C19.4 2 21 5 21.2 8C23.6 9.6 25.6 11.6 25.8 14C26 16.4 24.4 17.6 24.6 20C25 25 28 31 28.6 36C28.4 38.6 27 40 27.6 42.6C29.6 45 30 48 28.4 51C25 55.4 18 56.6 12 55.6C6.6 54.6 1.6 50.6 1.4 46.6C1.8 43.6 5 42 6.2 38.6C6.6 32 6.4 25 7.6 19C8.6 13.6 9.6 9 10.8 6C11.8 3.4 13.4 2 15.6 2Z" fill="url(#mg)"/><path d="M12 12C11 22 10.6 34 9 46M16 14C15.6 26 16 38 14.6 52M20.6 20C21 30 22 40 21.6 52" stroke="#36709a" stroke-width="1.2" fill="none" opacity="0.6"/><path d="M18.6 16C20 13 23 12.4 23.6 14.6C24 17 21.6 18.6 20 18.4" fill="#5c9ecb" opacity="0.8"/></svg>
<!-- view cube -->
<svg style="left:511px;top:860px" width="180" height="161" viewBox="511 860 180 161">
<path d="M551 888L629.6 887L633 990.7L553.7 992.4Z" fill="#3c3c3d" opacity="0.96"/>
<path d="M551.6 917.4L630.6 916.4" stroke="#464648" stroke-width="1"/>
<path d="M549.7 964L549.4 893" stroke="#8484c6" stroke-width="3"/><path d="M543 895.4L549.4 883.4L555.6 895.4Z" fill="#8484c6"/>
<path d="M550 964.4L624 962" stroke="#48704b" stroke-width="2.2"/><path d="M623 955.8L635.4 961.4L623 967.4Z" fill="#4a754d"/>
<path d="M549.8 964L552 988" stroke="#c67c7c" stroke-width="3"/><path d="M546.6 987.4L557.6 986.4L552.8 997.6Z" fill="#c67c7c"/>
<text x="544.4" y="871.6" font-family="Liberation Sans,sans-serif" font-size="14" fill="#8484d4">z</text>
<text x="647.6" y="967.6" font-family="Liberation Sans,sans-serif" font-size="15" fill="#5a855c">y</text>
<text x="549.6" y="1006.4" font-family="Liberation Sans,sans-serif" font-size="14" fill="#cc7474">x</text>
<text x="574" y="960.6" font-family="Liberation Sans,sans-serif" font-size="15.5" fill="#e4e4e4" textLength="37.5" lengthAdjust="spacingAndGlyphs">Right</text>
<text transform="translate(585.4 896.6) rotate(90) scale(1 0.62)" font-family="Liberation Sans,sans-serif" font-size="8" fill="#dcdcdc">Top</text>
</svg>
<!-- camera button -->
<div class="abs" style="left:679px;top:958px;width:45px;height:45px;border-radius:50%;background:#1b1b1c"></div>
<svg style="left:688px;top:967px" width="27" height="27" viewBox="0 0 27 27"><g fill="none" stroke="#f0f0f0" stroke-width="1.7" stroke-linecap="round" stroke-linejoin="round"><path d="M1.4 7.4V4.4Q1.4 1.4 4.4 1.4H7.4M19.6 1.4H22.6Q25.6 1.4 25.6 4.4V7.4M25.6 19.6V22.6Q25.6 25.6 22.6 25.6H19.6M7.4 25.6H4.4Q1.4 25.6 1.4 22.6V19.6"/><path d="M13.5 5.6L20.2 9.4V17.4L13.5 21.4L6.8 17.4V9.4Z" stroke-width="1.5"/><path d="M6.8 9.4L13.5 13.4L20.2 9.4M13.5 13.4V21.4" stroke-width="1.5"/></g></svg>
<!-- horizontal slider -->
<div class="abs" style="left:797px;top:974px;width:778px;height:24px;border-radius:12px;background:#414046"></div>
<div class="abs" style="left:803px;top:980px;width:765px;height:12px;border-radius:6px;background:#00ae42"></div>
<div class="abs" style="left:1550px;top:974px;width:24px;height:24px;border-radius:50%;background:#00ae42;border:2px solid #414046"></div>
<svg style="left:1577px;top:975px" width="26" height="22" viewBox="0 0 26 22"><path d="M1 11L5.4 7.6V2.4Q5.4 0.4 7.4 0.4H22Q24 0.4 24 2.4V19.6Q24 21.6 22 21.6H7.4Q5.4 21.6 5.4 19.6V14.4Z" fill="#414046"/></svg>
<div class="t" id="tS3" style="left:1586.5px;top:978px;font-size:16px;color:#00ae42">3</div>
<!-- vertical slider -->
<div class="abs" style="left:1874px;top:208px;width:24px;height:689px;border-radius:12px;background:#414046"></div>
<div class="abs" style="left:1880px;top:214px;width:12px;height:677px;border-radius:6px;background:#00ae42"></div>
<div class="abs" style="left:1874px;top:208px;width:24px;height:24px;border-radius:50%;background:#00ae42;border:2px solid #414046"></div>
<svg style="left:1876px;top:210px" width="20" height="20" viewBox="0 0 20 20"><path d="M10 4V16M4 10H16" stroke="#3b4a41" stroke-width="1.2"/></svg>
<div class="abs" style="left:1874px;top:873px;width:24px;height:24px;border-radius:50%;background:#00ae42;border:2px solid #414046"></div>
<svg style="left:1815px;top:179px" width="60" height="43" viewBox="0 0 60 43"><path d="M3 1H48Q50 1 50 3V32L58 41H3Q1 41 1 39V3Q1 1 3 1Z" fill="#414046"/></svg>
<div class="t" id="tV498" style="left:1829px;top:184px;font-size:16px;color:#00ae42">498</div>
<div class="t" id="tV9960" style="left:1822px;top:202px;font-size:16px;color:#00ae42">99.60</div>
<svg style="left:1820px;top:883px" width="56" height="44" viewBox="0 0 56 44"><path d="M3 2H41L52 1L45 9V40Q45 42 43 42H3Q1 42 1 40V4Q1 2 3 2Z" fill="#414046"/></svg>
<div class="t" id="tV1" style="left:1843px;top:888px;font-size:16px;color:#00ae42">1</div>
<div class="t" id="tV020" style="left:1830px;top:906px;font-size:16px;color:#00ae42">0.20</div>
<!-- layers icon -->
<svg style="left:1874px;top:975px" width="24" height="22" viewBox="0 0 24 22"><g fill="#21a452" stroke="#3a5646" stroke-width="0.9" stroke-linejoin="round"><path d="M12 11.4L22.6 16.2L12 21L1.4 16.2Z"/><path d="M12 6.6L22.6 11.4L12 16.2L1.4 11.4Z"/><path d="M12 1.4L22.6 6.4L12 11.4L1.4 6.4Z"/></g></svg>
<div class="abs" style="left:0;top:1019px;width:506px;height:1px;background:#050505"></div><div class="abs" style="left:0;top:1020px;width:511px;height:1px;background:#333438"></div><div class="abs" style="left:511px;top:1020px;width:1408px;height:1px;background:#46464a"></div>
<!-- Slicing result panel -->
<style>
.p{position:absolute;white-space:nowrap;line-height:1;font-size:15.5px;color:#f2f2f2;transform-origin:0 50%}
.pb{font-weight:bold;color:#fff}
.sq{position:absolute;left:1289px;width:11px;height:11px}
.cb{position:absolute;left:1540px;width:18px;height:18px;background:#4d4d4d}
.pl{position:absolute;left:1277px;width:519px;height:1px;background:#b4b4b4}
</style>
<div class="abs" style="left:1277px;top:84px;width:519px;height:433px;background:rgba(26,26,26,0.8)"></div>
<div class="abs" style="left:1277px;top:84px;width:519px;height:34px;background:#1c1c1c"></div>
<div class="p pb" id="pSlicing" style="left:1288px;top:94px">Slicing Result</div>
<svg style="left:1774px;top:94px" width="17" height="15" viewBox="0 0 17 15"><path d="M1.4 7.4L8.5 1.6L15.6 7.4M1.4 13L8.5 7.2L15.6 13" stroke="#fff" stroke-width="1.4" fill="none"/></svg>
<div class="p pb" id="pColorScheme" style="left:1288px;top:124px">Color Scheme</div>
<div class="abs" style="left:1397px;top:122px;width:240px;height:24px;border-radius:3px;background:#1e1e1e"></div>
<svg style="left:1402px;top:131px" width="15" height="8" viewBox="0 0 15 8"><path d="M1 1.2L7.5 6.4L14 1.2" stroke="#e8e8e8" stroke-width="1.2" fill="none" stroke-linecap="round" stroke-linejoin="round"/></svg>
<div class="p" id="pFilCombo" style="left:1425px;top:127px">Filament</div>
<div class="p pb" id="pHFil" style="left:1288px;top:152px">Filament</div>
<div class="p pb" id="pHModel" style="left:1406px;top:152px">Model</div>
<div class="p pb" id="pHSupport" style="left:1536px;top:152px">Support</div>
<div class="p pb" id="pHTotal" style="left:1666px;top:152px">Total</div>
<div class="pl" style="top:172px"></div>
<div class="sq" style="top:179px;background:#6bb8e8"></div>
<div class="p" id="pF1" style="left:1309px;top:178px">1</div>
<div class="p" id="pM1" style="left:1406px;top:178px">4.79 m</div>
<div class="p" id="pM2" style="left:1406px;top:196px">14.53 g</div>
<div class="p" id="pS1" style="left:1536px;top:178px">0.62 m</div>
<div class="p" id="pS2" style="left:1536px;top:196px">1.89 g</div>
<div class="p" id="pT1" style="left:1666px;top:178px">5.42 m</div>
<div class="p" id="pT2" style="left:1666px;top:196px">16.41 g</div>
<div class="p" id="pFCT" style="left:1288px;top:220px">Filament change times:&nbsp; 0</div>
<div class="p" id="pCost" style="left:1288px;top:242px">Cost:&nbsp; 0.49</div>
<div class="p pb" id="pTimeEst" style="left:1288px;top:273px">Time Estimation</div>
<div class="pl" style="top:293px"></div>
<div class="p" id="pPrep" style="left:1288px;top:299px">Prepare and timelapse time:</div>
<div class="p" id="pPrepV" style="left:1489px;top:299px">6m31s + 13m26s</div>
<div class="p" id="pMPT" style="left:1288px;top:321px">Model printing time:</div>
<div class="p" id="pMPTV" style="left:1489px;top:321px">1h33m</div>
<div class="p" id="pTT" style="left:1288px;top:343px">Total time:</div>
<div class="p" id="pTTV" style="left:1489px;top:343px">1h53m</div>
<div class="p pb" id="pOptions" style="left:1288px;top:369px">Options</div>
<div class="p pb" id="pDisplay" style="left:1536px;top:369px">Display</div>
<div class="pl" style="top:389px"></div>
<div class="sq" style="top:396px;background:#3b4aa8"></div><div class="p" id="pTravel" style="left:1308px;top:395px">Travel</div><div class="cb" style="top:393px"></div>
<div class="sq" style="top:420px;background:#d020d8"></div><div class="p" id="pRetract" style="left:1308px;top:419px">Retract</div><div class="cb" style="top:417px"></div>
<div class="sq" style="top:444px;background:#3aa8d0"></div><div class="p" id="pUnretract" style="left:1308px;top:443px">Unretract</div><div class="cb" style="top:441px"></div>
<div class="sq" style="top:468px;background:#ffff00"></div><div class="p" id="pWipe" style="left:1308px;top:467px">Wipe</div><div class="cb" style="top:465px"></div>
<div class="sq" style="top:492px;background:#e6e6e6"></div><div class="p" id="pSeams" style="left:1308px;top:491px">Seams</div><div class="cb" style="top:489px"></div>
<svg style="left:1540px;top:489px" width="18" height="18" viewBox="0 0 18 18"><path d="M3.6 9.4L7.4 13L14.6 5.4" stroke="#00ae42" stroke-width="2.4" fill="none"/></svg>
</body></html>
